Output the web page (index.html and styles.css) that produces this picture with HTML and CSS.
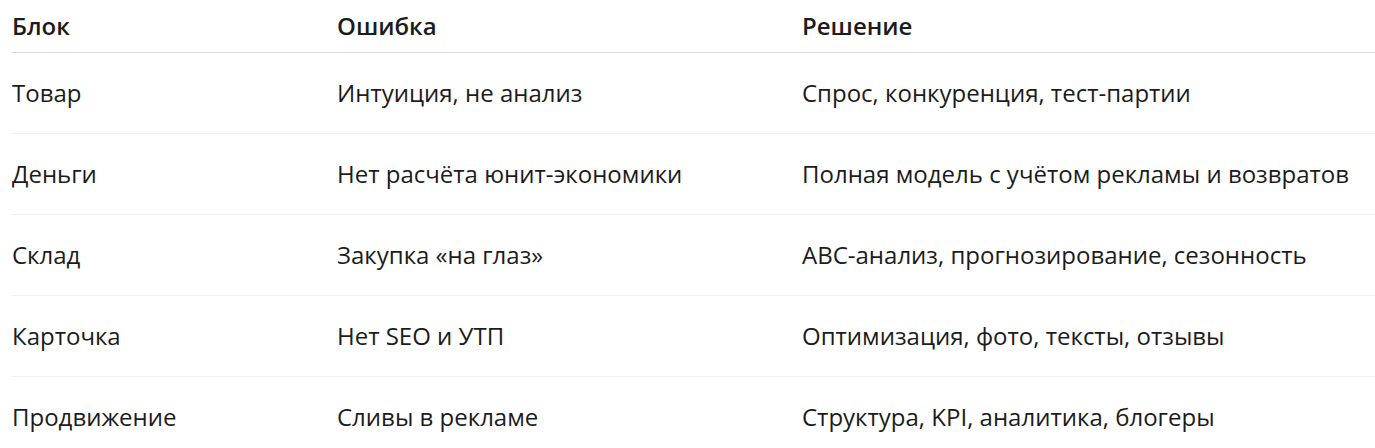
FILE: index.html
```html
<!DOCTYPE html>
<html lang="ru">
<head>
<meta charset="utf-8">
<title>Таблица</title>
<link rel="stylesheet" href="styles.css">
</head>
<body>
<table class="tbl">
  <colgroup>
    <col class="c1"><col class="c2"><col class="c3">
  </colgroup>
  <thead>
    <tr><th>Блок</th><th>Ошибка</th><th>Решение</th></tr>
  </thead>
  <tbody>
    <tr><td>Товар</td><td>Интуиция, не анализ</td><td>Спрос, конкуренция, тест-партии</td></tr>
    <tr><td>Деньги</td><td>Нет расчёта юнит-экономики</td><td>Полная модель с учётом рекламы и возвратов</td></tr>
    <tr><td>Склад</td><td>Закупка «на глаз»</td><td>ABC-анализ, прогнозирование, сезонность</td></tr>
    <tr><td>Карточка</td><td>Нет SEO и УТП</td><td>Оптимизация, фото, тексты, отзывы</td></tr>
    <tr><td>Продвижение</td><td>Сливы в рекламе</td><td>Структура, KPI, аналитика, блогеры</td></tr>
  </tbody>
</table>
</body>
</html>
```
FILE: styles.css
```css
html, body {
  margin: 0;
  padding: 0;
  background: #ffffff;
}
body {
  padding-left: 12px;
  font-family: "Open Sans", "Noto Sans", sans-serif;
  color: #1c1c1c;
  overflow: hidden;
}
.tbl {
  border-collapse: collapse;
  width: 1400px;
  table-layout: fixed;
  font-size: 24px;
}
.c1 { width: 325px; }
.c2 { width: 465px; }
.tbl th {
  text-align: left;
  font-weight: 600;
  padding: 10px 12px 11px 0;
  line-height: 31px;
  border-bottom: 1px solid #dcdcdc;
}
.tbl td {
  padding: 24px 12px 24px 0;
  line-height: 32px;
  border-bottom: 1px solid #efefef;
}
```
